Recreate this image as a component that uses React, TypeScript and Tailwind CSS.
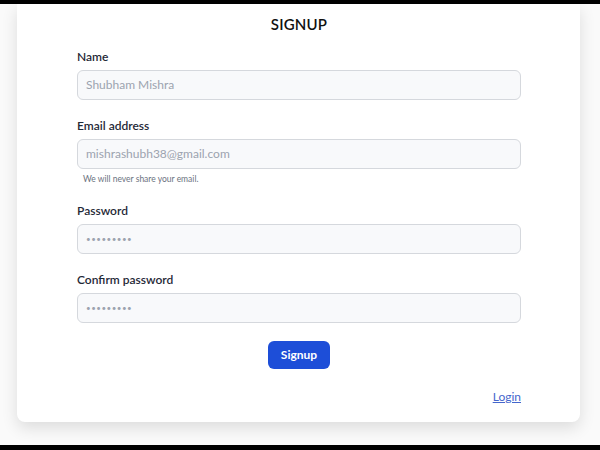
import React from "react";

function Field({ label, value, type = "text", hint }: { label: string; value: string; type?: string; hint?: string }) {
  return (
    <div className="flex flex-col">
      <label className="text-[12px] font-semibold text-[#1f2937] leading-[16px] mb-[5px]">{label}</label>
      <div className="h-[30px] rounded-[6px] border border-[#d5d8dd] bg-[#f8f9fb] flex items-center px-[8px]">
        {type === "password" ? (
          <span className="text-[#9ca3af] text-[8px] tracking-[0.5px] leading-none">•••••••••</span>
        ) : (
          <span className="text-[#9ca3af] text-[12px] leading-none">{value}</span>
        )}
      </div>
      {hint && <span className="text-[8.5px] text-[#6b7280] mt-[5px] ml-[6px] leading-[11px]">{hint}</span>}
    </div>
  );
}

export default function App() {
  return (
    <div className="w-[600px] h-[450px] bg-black flex flex-col overflow-hidden" style={{ fontFamily: "Lato, 'Noto Sans', sans-serif" }}>
      <div className="h-[4px] shrink-0" />
      <div className="h-[441px] bg-[#fafafa] shrink-0">
        <div className="ml-[17px] w-[563px] bg-white rounded-b-[8px] shadow-[0_6px_16px_rgba(0,0,0,0.12)] h-[418px] pl-[60px] pr-[59px] pt-[11px] flex flex-col">
          <h1 className="text-center text-[15px] font-semibold text-[#111] leading-[18px] tracking-[0.2px]">SIGNUP</h1>
          <div className="mt-[16px] flex flex-col gap-[18px]">
            <Field label="Name" value="Shubham Mishra" />
            <Field label="Email address" value="mishrashubh38@gmail.com" hint="We will never share your email." />
            <Field label="Password" value="" type="password" />
            <Field label="Confirm password" value="" type="password" />
          </div>
          <div className="flex justify-center mt-[18px]">
            <button className="h-[28px] w-[62px] rounded-[6px] bg-[#1d4ed8] text-white text-[12px] font-bold">Signup</button>
          </div>
          <div className="flex justify-end mt-[20px]">
            <a className="text-[12px] text-[#4466cc] underline leading-[16px]">Login</a>
          </div>
        </div>
      </div>
    </div>
  );
}
